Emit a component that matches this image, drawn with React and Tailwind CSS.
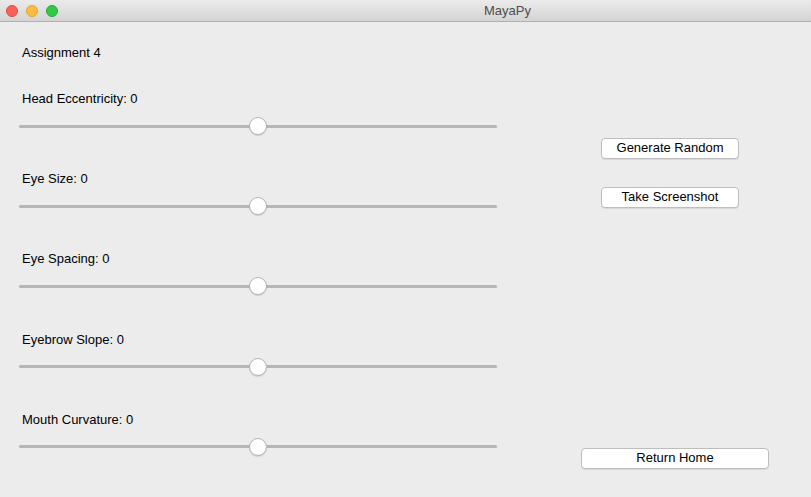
const sliders = [
	'Head Eccentricity: 0',
	'Eye Size: 0',
	'Eye Spacing: 0',
	'Eyebrow Slope: 0',
	'Mouth Curvature: 0',
];

const Slider = () => (
	<div className="relative h-[18px] w-[478px] flex items-center">
		<div className="h-[3px] w-full rounded-full bg-[#b6b6b6]" />
		<div className="absolute left-[230px] top-0 h-[18px] w-[18px] rounded-full border border-[#b4b4b4] bg-white shadow-[0_1px_1px_rgba(0,0,0,0.12)]" />
	</div>
);

const MacButton = ({ label, className }) => (
	<button
		className={`h-[21px] rounded-[4px] border border-[#bdbdbd] bg-white pb-[2px] text-[13px] leading-[17px] text-black shadow-[0_1px_0_rgba(0,0,0,0.08)] ${className}`}
	>
		{label}
	</button>
);

const App = () => {
	return (
		<div
			className="w-[811px] h-[497px] bg-[#ececec] flex flex-col overflow-hidden"
			style={{ fontFamily: '"Liberation Sans", Arial, sans-serif' }}
		>
			{/* title bar */}
			<div className="relative h-[22px] shrink-0 bg-gradient-to-b from-[#ebebeb] to-[#d4d4d4] border-b border-[#b1b1b1] flex items-center justify-center pl-[204px]">
				<div className="absolute left-[6px] top-[5px] flex gap-[8px]">
					<div className="h-[12px] w-[12px] rounded-full bg-[#fc605b] border border-[#de4a45]" />
					<div className="h-[12px] w-[12px] rounded-full bg-[#fdbc40] border border-[#dea236]" />
					<div className="h-[12px] w-[12px] rounded-full bg-[#34c84a] border border-[#27aa35]" />
				</div>
				<span className="text-[13px] text-[#4d4d4d]">MayaPy</span>
			</div>

			<div className="flex flex-1">
				{/* left column */}
				<div className="w-[497px] pl-[19px] pt-[23px]">
					<div className="pl-[3px] text-[13px] leading-[16px] text-black h-[46px]">Assignment 4</div>
					{sliders.map((s) => (
						<div key={s} className="h-[80.2px]">
							<div className="pl-[3px] text-[13px] leading-[16px] text-black">{s}</div>
							<div className="mt-[10px]">
								<Slider />
							</div>
						</div>
					))}
				</div>

				{/* right column */}
				<div className="flex flex-col items-start pt-[116px]">
					<MacButton label="Generate Random" className="ml-[104px] w-[138px]" />
					<MacButton label="Take Screenshot" className="ml-[104px] mt-[28px] w-[138px]" />
					<MacButton label="Return Home" className="ml-[84px] mt-[240px] w-[188px]" />
				</div>
			</div>
		</div>
	);
};

export default App;
